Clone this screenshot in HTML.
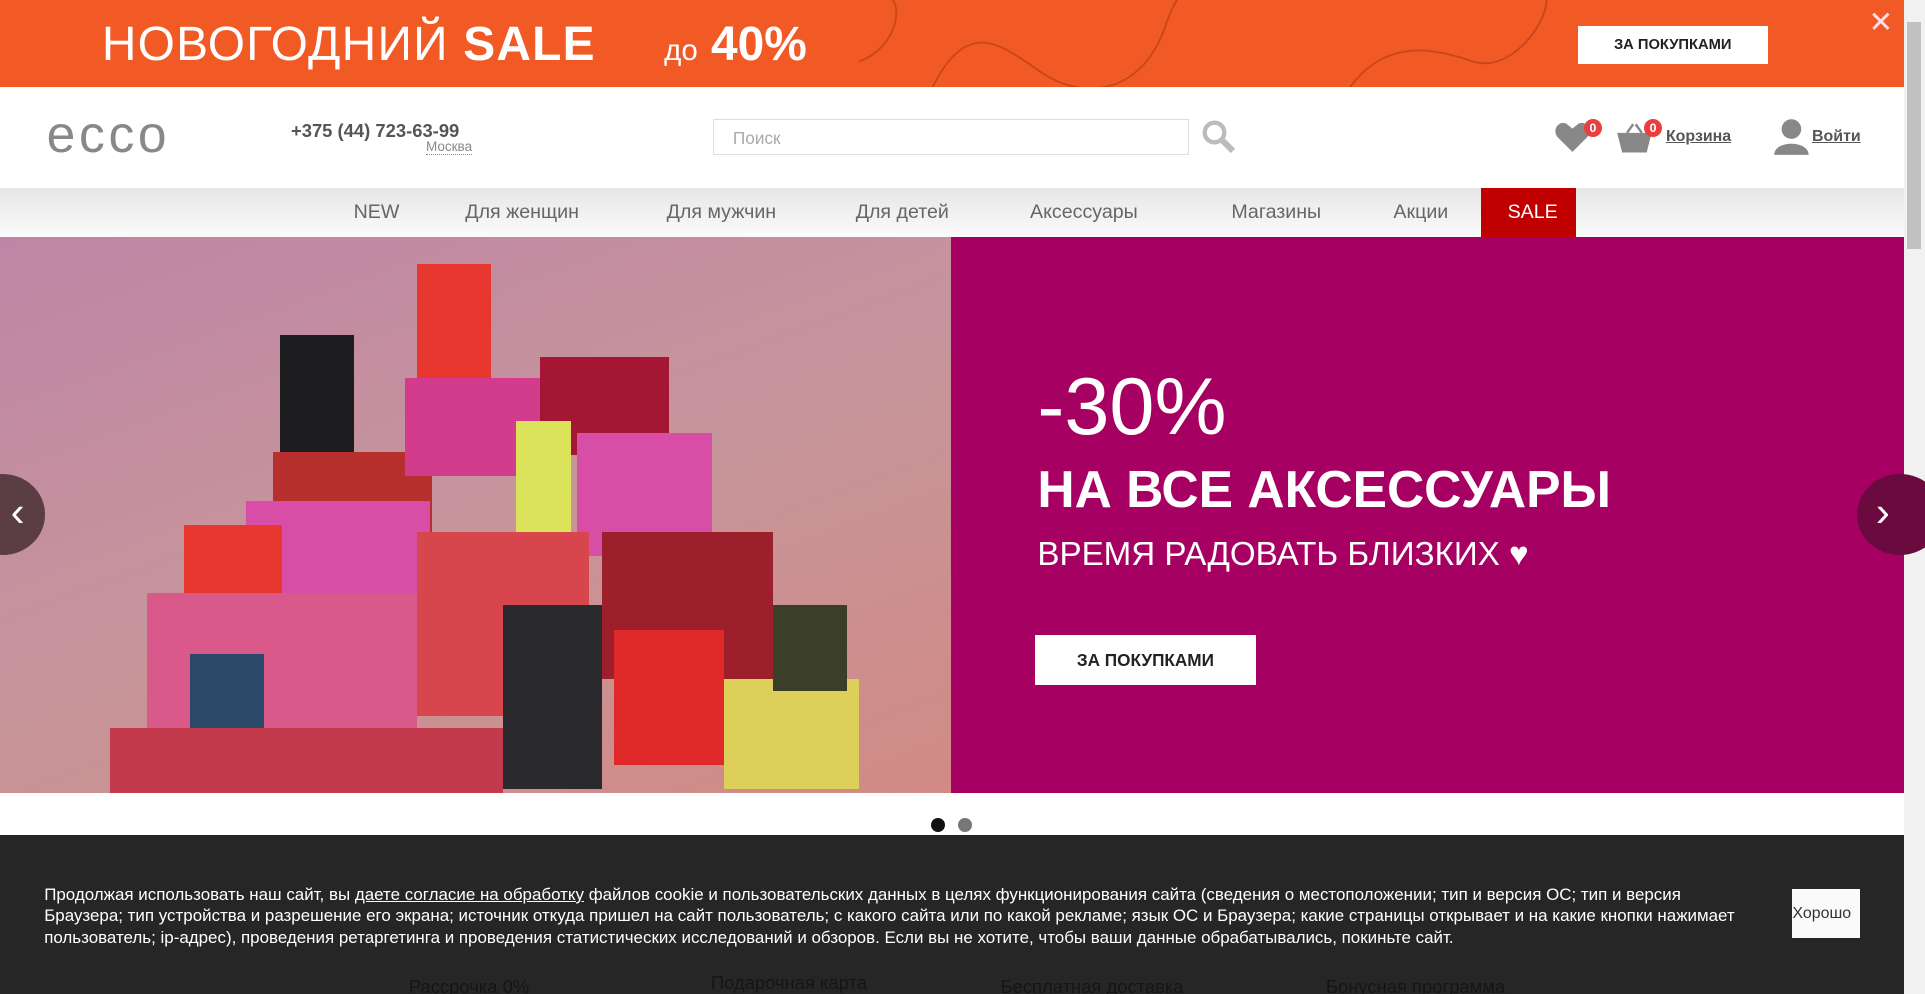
<!DOCTYPE html>
<html><head><meta charset="utf-8"><style>
html,body{margin:0;padding:0;width:1925px;height:994px;overflow:hidden;background:#fff}
#w{zoom:1.22768;width:1568px;height:810px;position:relative;font-family:"Liberation Sans","DejaVu Sans",sans-serif;overflow:hidden}
.a{position:absolute}
.top{left:0;top:0;width:1551px;height:71px;background:#f15a24}
.nav{left:0;top:153px;width:1551px;height:40px;background:linear-gradient(#e6e6e6,#fbfbfb)}
.nav span{position:absolute;top:11px;font-size:16px;color:#666}
.box{position:absolute}
</style></head><body><div id="w">
<div class="a top">
<svg class="a" style="left:700px;top:0" width="850" height="71"><path d="M60 71 C90 10 120 40 150 60 S230 80 250 20 S300 0 300 -5" stroke="#c8461a" stroke-width="1.5" fill="none"/><path d="M400 71 C430 30 470 40 500 50 S560 20 560 0" stroke="#c8461a" stroke-width="1.5" fill="none"/><path d="M0 50 C30 40 40 0 20 -5" stroke="#c8461a" stroke-width="1.5" fill="none"/></svg>
<div class="a" style="left:83px;top:14px;font-size:39px;color:#fff;letter-spacing:1px">НОВОГОДНИЙ <b>SALE</b></div>
<div class="a" style="left:541px;top:14px;font-size:39px;color:#fff"><span style="font-size:24px">до</span> <b>40%</b></div>
<div class="a" style="left:1285px;top:21px;width:155px;height:31px;background:#fff;font-size:12px;font-weight:bold;color:#222;text-align:center;line-height:31px">ЗА ПОКУПКАМИ</div>
<div class="a" style="left:1522px;top:4px;font-size:24px;color:#fde">✕</div>
</div>
<div class="a" style="left:1551px;top:0;width:17px;height:810px;background:#f1f1f1"></div>
<div class="a" style="left:1553px;top:18px;width:12px;height:185px;background:#c1c1c1"></div>
<div class="a" style="left:38px;top:85px;font-size:42px;color:#888;letter-spacing:3px">ecco</div>
<div class="a" style="left:237px;top:98px;font-size:15px;font-weight:bold;color:#555">+375 (44) 723-63-99</div>
<div class="a" style="left:347px;top:113px;font-size:11px;color:#888;border-bottom:1px dotted #888">Москва</div>
<div class="a" style="left:581px;top:97px;width:386px;height:28px;border:1px solid #ddd"></div>
<div class="a" style="left:597px;top:104px;font-size:14px;color:#aaa">Поиск</div>
<svg class="a" style="left:978px;top:97px" width="28" height="28"><circle cx="11" cy="11" r="8" stroke="#bbb" stroke-width="3.5" fill="none"/><path d="M17 17 L26 26" stroke="#bbb" stroke-width="5"/></svg>
<svg class="a" style="left:1266px;top:98px" width="30" height="28"><path d="M15 26 L3 14 C-2 8 4 0 10 3 L15 7 L20 3 C26 0 32 8 27 14Z" fill="#888"/></svg>
<div class="a" style="left:1290px;top:97px;width:15px;height:15px;border-radius:50%;background:#e84040;color:#fff;font-size:10px;font-weight:bold;text-align:center;line-height:15px">0</div>
<svg class="a" style="left:1316px;top:100px" width="30" height="26"><path d="M1 8 H29 L25 24 H5Z" fill="#888"/><path d="M9 8 L14 1 M21 8 L16 1" stroke="#888" stroke-width="2"/></svg>
<div class="a" style="left:1339px;top:97px;width:15px;height:15px;border-radius:50%;background:#e84040;color:#fff;font-size:10px;font-weight:bold;text-align:center;line-height:15px">0</div>
<div class="a" style="left:1357px;top:104px;font-size:13px;font-weight:bold;color:#555;text-decoration:underline">Корзина</div>
<svg class="a" style="left:1444px;top:96px" width="30" height="30"><circle cx="15" cy="9" r="8" fill="#888"/><path d="M1 30 C1 18 29 18 29 30Z" fill="#888"/></svg>
<div class="a" style="left:1476px;top:104px;font-size:13px;font-weight:bold;color:#555;text-decoration:underline">Войти</div>
<div class="a nav">
<span style="left:288px">NEW</span><span style="left:379px">Для женщин</span><span style="left:543px">Для мужчин</span><span style="left:697px">Для детей</span><span style="left:839px">Аксессуары</span><span style="left:1003px">Магазины</span><span style="left:1135px">Акции</span>
<div class="a" style="left:1206px;top:0;width:78px;height:40px;background:#c00000"></div><span style="left:1228px;color:#fff">SALE</span>
</div>
<div class="a" style="left:0;top:193px;width:775px;height:453px;background:linear-gradient(160deg,#c085a6,#c6959b 50%,#d18a84);overflow:hidden">
<div class="box" style="left:340px;top:22px;width:60px;height:100px;background:#e8372e"></div>
<div class="box" style="left:228px;top:80px;width:60px;height:102px;background:#1d1d1f"></div>
<div class="box" style="left:440px;top:98px;width:105px;height:80px;background:#a41633"></div>
<div class="box" style="left:222px;top:175px;width:130px;height:75px;background:#b8302e"></div>
<div class="box" style="left:330px;top:115px;width:110px;height:80px;background:#d33c8c"></div>
<div class="box" style="left:200px;top:215px;width:150px;height:100px;background:#d84ea6"></div>
<div class="box" style="left:420px;top:150px;width:45px;height:100px;background:#dbe35a"></div>
<div class="box" style="left:470px;top:160px;width:110px;height:100px;background:#d84ea6"></div>
<div class="box" style="left:340px;top:240px;width:140px;height:150px;background:#d8464d"></div>
<div class="box" style="left:490px;top:240px;width:140px;height:120px;background:#9c1f2b"></div>
<div class="box" style="left:150px;top:235px;width:80px;height:55px;background:#e8372e"></div>
<div class="box" style="left:120px;top:290px;width:220px;height:160px;background:#d95a8a"></div>
<div class="box" style="left:155px;top:340px;width:60px;height:100px;background:#2b4a6a"></div>
<div class="box" style="left:410px;top:300px;width:80px;height:150px;background:#2a2a2e"></div>
<div class="box" style="left:500px;top:320px;width:90px;height:110px;background:#e02a2a"></div>
<div class="box" style="left:590px;top:360px;width:110px;height:90px;background:#dcd05a"></div>
<div class="box" style="left:630px;top:300px;width:60px;height:70px;background:#3b3f2a"></div>
<div class="box" style="left:90px;top:400px;width:320px;height:60px;background:#c43a4d"></div>
</div>
<div class="a" style="left:775px;top:193px;width:776px;height:453px;background:#a60062"></div>
<div class="a" style="left:845px;top:294px;font-size:66px;color:#fff">-30%</div>
<div class="a" style="left:845px;top:374px;font-size:42px;color:#fff;font-weight:bold">НА ВСЕ АКСЕССУАРЫ</div>
<div class="a" style="left:845px;top:437px;font-size:27px;color:#fff">ВРЕМЯ РАДОВАТЬ БЛИЗКИХ ♥</div>
<div class="a" style="left:843px;top:517px;width:180px;height:41px;background:#fff;font-size:14px;font-weight:bold;color:#222;text-align:center;line-height:41px">ЗА ПОКУПКАМИ</div>
<div class="a" style="left:-33px;top:386px;width:70px;height:66px;border-radius:50%;background:#5a3e44;color:#fff;font-size:34px;line-height:62px;text-align:right;box-sizing:border-box;padding-right:17px">‹</div>
<div class="a" style="left:1513px;top:386px;width:70px;height:66px;border-radius:50%;background:#6a0a3e;color:#fff;font-size:34px;line-height:62px;padding-left:15px;box-sizing:border-box">›</div>
<div class="a" style="left:758px;top:666px;width:12px;height:12px;border-radius:50%;background:#111"></div>
<div class="a" style="left:780px;top:666px;width:12px;height:12px;border-radius:50%;background:#777"></div>
<div class="a" style="left:0;top:680px;width:1551px;height:130px;background:#262626"></div>
<div class="a" style="left:333px;top:795px;font-size:15px;color:#151515">Рассрочка 0%</div>
<div class="a" style="left:579px;top:792px;font-size:15px;color:#151515">Подарочная карта</div>
<div class="a" style="left:815px;top:795px;font-size:15px;color:#151515">Бесплатная доставка</div>
<div class="a" style="left:1080px;top:795px;font-size:15px;color:#151515">Бонусная программа</div>
<div class="a" style="left:36px;top:720px;width:1400px;font-size:13.8px;line-height:17.5px;color:#fff">Продолжая использовать наш сайт, вы <u>даете согласие на обработку</u> файлов cookie и пользовательских данных в целях функционирования сайта (сведения о местоположении; тип и версия ОС; тип и версия Браузера; тип устройства и разрешение его экрана; источник откуда пришел на сайт пользователь; с какого сайта или по какой рекламе; язык ОС и Браузера; какие страницы открывает и на какие кнопки нажимает пользователь; ip-адрес), проведения ретаргетинга и проведения статистических исследований и обзоров. Если вы не хотите, чтобы ваши данные обрабатывались, покиньте сайт.</div>
<div class="a" style="left:1460px;top:724px;width:55px;height:40px;background:#fafafa;font-size:13px;color:#333;line-height:40px;overflow:hidden;white-space:nowrap">Хорошо</div>
</div></body></html>
